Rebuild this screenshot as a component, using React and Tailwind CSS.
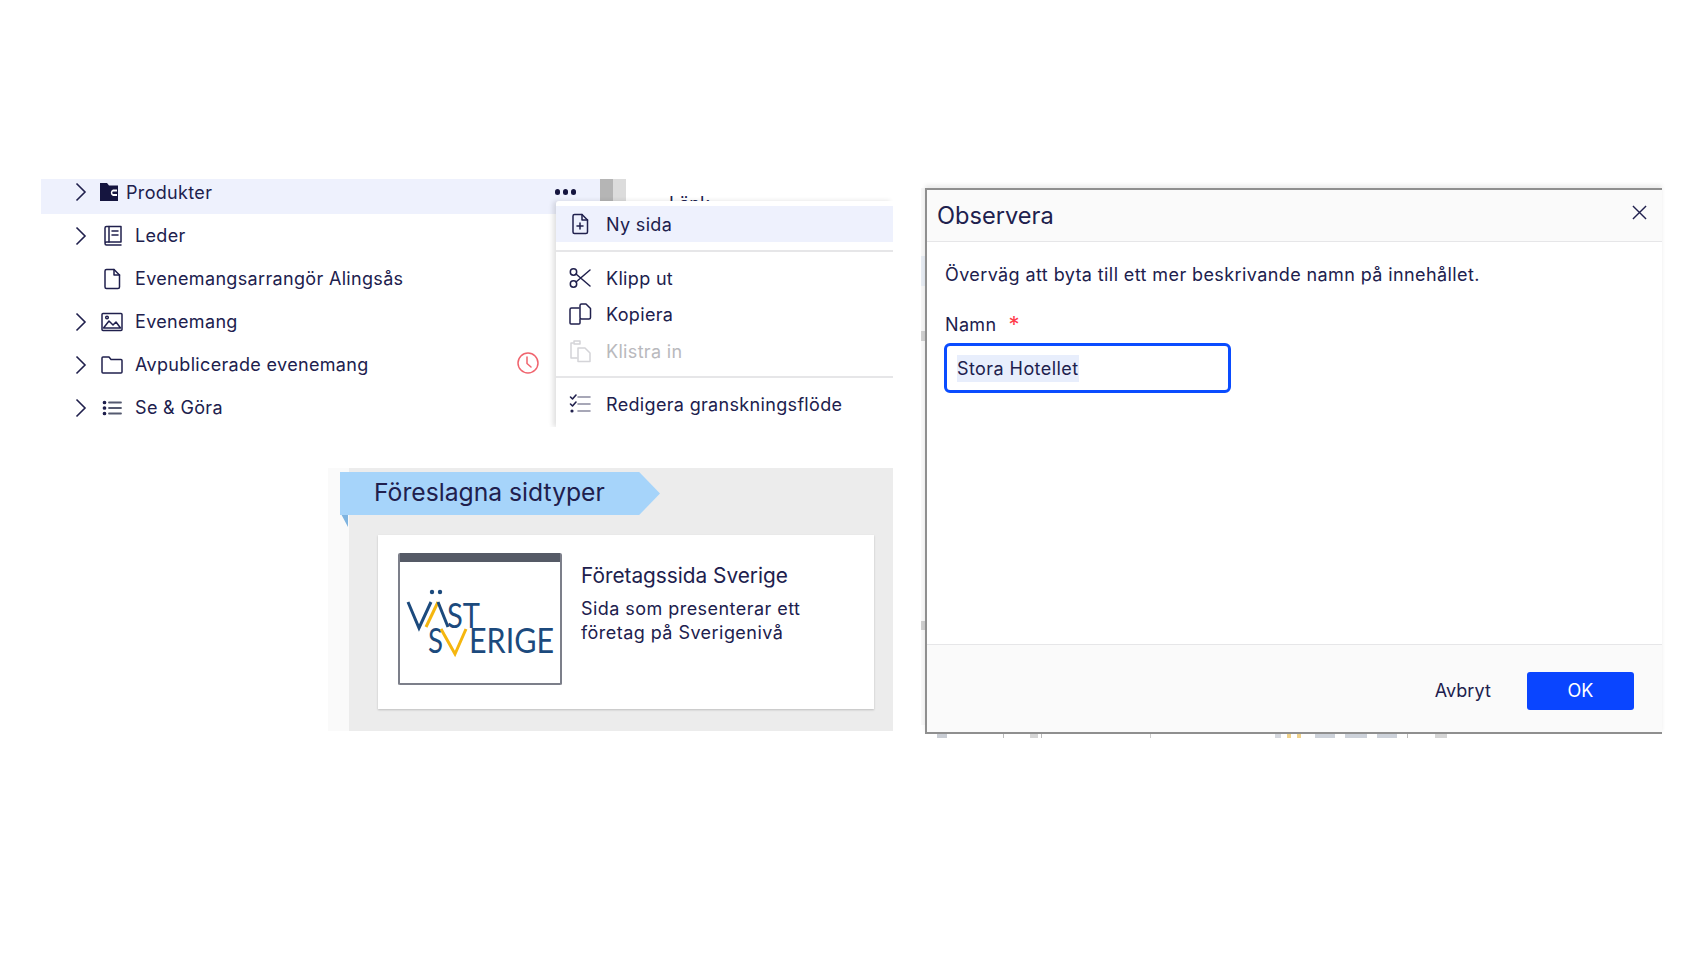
import React from "react";

const NAVY = "#20204d";

function Chevron() {
  return (
    <svg width="14" height="20" viewBox="0 0 14 20" fill="none" stroke={NAVY} strokeWidth="1.6">
      <path d="M2.5 1.5 L11 10 L2.5 18.5" />
    </svg>
  );
}

function Ico({ children, w = 24, h = 24, color = NAVY, sw = 1.5 }) {
  return (
    <svg width={w} height={h} viewBox="0 0 24 24" fill="none" stroke={color} strokeWidth={sw} strokeLinecap="round" strokeLinejoin="round">
      {children}
    </svg>
  );
}

const ProdIcon = () => (
  <svg width="20" height="20" viewBox="0 0 20 20">
    <path d="M1 1 H8 L10 3.5 H19 V19 H1 Z" fill="#15153f" />
    <path d="M18 7.5 H14 A3.5 3.5 0 0 0 14 14 H18 V12 H14.5 A1.2 1.2 0 0 1 14.5 9.5 H18 Z" fill="#fff" />
  </svg>
);
const BookIcon = () => (
  <Ico><path d="M5 18.5 V4 A1.5 1.5 0 0 1 6.5 2.5 H21 V18 H6.5 A1.5 1.5 0 0 0 5 19.5 A1.5 1.5 0 0 0 6.5 21 H21" /><path d="M9 2.5 V18" /><path d="M12 7 H18 M12 11 H18" /></Ico>
);
const FileIcon = () => (
  <Ico><path d="M5 4 A1.5 1.5 0 0 1 6.5 2.5 H14 L19.5 8 V20 A1.5 1.5 0 0 1 18 21.5 H6.5 A1.5 1.5 0 0 1 5 20 Z" /><path d="M14 2.5 V8 H19.5" /></Ico>
);
const ImgIcon = () => (
  <Ico><rect x="2" y="3.5" width="20" height="17" rx="1" /><circle cx="7" cy="7.5" r="1.3" /><path d="M3.5 18 L9 11 L13 15 L16 12 L20.5 18 Z" /></Ico>
);
const FolderIcon = () => (
  <Ico><path d="M2 5 A1 1 0 0 1 3 4 H9 L11 6.5 H21 A1 1 0 0 1 22 7.5 V19 A1 1 0 0 1 21 20 H3 A1 1 0 0 1 2 19 Z" /></Ico>
);
const ListIcon = () => (
  <Ico><path d="M9 6.5 H21 M9 12 H21 M9 17.5 H21" stroke="#555a70" strokeWidth="1.8" /><circle cx="4.5" cy="6.5" r="1.1" fill={NAVY} /><circle cx="4.5" cy="12" r="1.1" fill={NAVY} /><circle cx="4.5" cy="17.5" r="1.1" fill={NAVY} /></Ico>
);
const ClockIcon = () => (
  <Ico color="#f0646e" w={24} h={24}><circle cx="12" cy="12" r="10" /><path d="M11 6 V12.5 L15 16" /></Ico>
);

const rows = [
  { label: "Leder", icon: <BookIcon />, chev: true },
  { label: "Evenemangsarrangör Alingsås", icon: <FileIcon />, chev: false },
  { label: "Evenemang", icon: <ImgIcon />, chev: true },
  { label: "Avpublicerade evenemang", icon: <FolderIcon />, chev: true, clock: true },
  { label: "Se & Göra", icon: <ListIcon />, chev: true },
];

function Tree() {
  return (
    <div className="flex flex-col w-[585px]">
      <div className="flex">
        <div className="flex items-center w-[559px] h-[35px] pb-[9px] pl-[33px] bg-[#eef1fd] text-[18px] tracking-[0.33px]">
          <span className="w-[14px] flex"><Chevron /></span>
          <span className="ml-[11px] w-[27px] flex"><ProdIcon /></span>
          <span>Produkter</span>
          <span className="ml-auto mr-[24px] flex gap-[2.5px]">
            <i className="w-[5.5px] h-[5.5px] rounded-full bg-[#15153f]" />
            <i className="w-[5.5px] h-[5.5px] rounded-full bg-[#15153f]" />
            <i className="w-[5.5px] h-[5.5px] rounded-full bg-[#15153f]" />
          </span>
        </div>
        <div className="w-[13px] h-[22px] bg-[#b5b5b5]" />
        <div className="w-[13px] h-[22px] bg-[#dcdcdc]" />
      </div>
      {rows.map((r) => (
        <div key={r.label} className="flex items-center h-[43px] w-[559px] pl-[33px] text-[18px] tracking-[0.33px]">
          <span className="w-[14px] flex">{r.chev && <Chevron />}</span>
          <span className="ml-[12px] w-[35px] flex">{r.icon}</span>
          <span>{r.label}</span>
          {r.clock && <span className="ml-auto mr-[60px] mb-[4px] flex"><ClockIcon /></span>}
        </div>
      ))}
    </div>
  );
}

function MenuItem({ icon, label, active, disabled }) {
  return (
    <div className={`flex items-center h-[36px] pl-[12px] text-[18px] tracking-[0.33px] ${active ? "bg-[#eef1fd]" : ""} ${disabled ? "text-[#b9b9bd]" : ""}`}>
      <span className="w-[38px] flex">{icon}</span>
      <span>{label}</span>
    </div>
  );
}

function Menu() {
  return (
    <div className="absolute left-[556px] top-[201px] w-[337px] h-[226px] bg-white pt-[5px] shadow-[-3px_0_5px_rgba(0,0,0,0.12)] rounded-tl-[3px] [clip-path:inset(-4px_0_0_-8px)]">
      <MenuItem active label="Ny sida" icon={<Ico><path d="M5 4 A1.5 1.5 0 0 1 6.5 2.5 H14 L19.5 8 V20 A1.5 1.5 0 0 1 18 21.5 H6.5 A1.5 1.5 0 0 1 5 20 Z" /><path d="M14 2.5 V8 H19.5" /><path d="M12 11 V17 M9 14 H15" /></Ico>} />
      <div className="h-[2px] bg-[#e6e6e8] mt-[8px] mb-[8px]" />
      <MenuItem label="Klipp ut" icon={<Ico><circle cx="5.5" cy="6" r="3.2" /><circle cx="5.5" cy="18" r="3.2" /><path d="M8 8 L22 20 M8 16 L22 4" /></Ico>} />
      <MenuItem label="Kopiera" icon={<Ico><path d="M11 6 H3.5 A1.5 1.5 0 0 0 2 7.5 V21 A1 1 0 0 0 3 22 H11 A1 1 0 0 0 12 21 V17" /><path d="M12 3.5 A1.5 1.5 0 0 1 13.5 2 H18 L22.5 6.5 V15.5 A1.5 1.5 0 0 1 21 17 H13.5 A1.5 1.5 0 0 1 12 15.5 Z" /></Ico>} />
      <div className="pt-[1px]">
        <MenuItem disabled label="Klistra in" icon={<Ico color="#d4d4d8"><path d="M5 4 H3 V19 H9" /><rect x="6" y="2" width="6" height="3" /><path d="M10 9 H17 L22 14 V22.5 H10 Z" /></Ico>} />
      </div>
      <div className="h-[2px] bg-[#e6e6e8] mt-[7px] mb-[8px]" />
      <MenuItem label="Redigera granskningsflöde" icon={<Ico sw={1.6}><path d="M10 5 H22 M10 12 H22 M10 19 H22" stroke="#8a8aa0" /><path d="M2.5 5 L4.5 7 L8 3 M2.5 12 L4.5 14 L8 10" /><circle cx="4" cy="19" r="0.8" /></Ico>} />
    </div>
  );
}

function Logo() {
  const blue = "#1c4a7d";
  const gold = "#f5b60f";
  return (
    <svg width="156" height="75" viewBox="0 0 156 75">
      <circle cx="31" cy="7" r="2.2" fill={blue} />
      <circle cx="39" cy="7" r="2.2" fill={blue} />
      <path d="M7 17 L18 43 L30 17" stroke={blue} strokeWidth="3" fill="none" />
      <path d="M25 42 L37 17" stroke={gold} strokeWidth="3" fill="none" />
      <path d="M37 17 L47 42" stroke={blue} strokeWidth="3" fill="none" />
      <text x="46" y="43" fontFamily="Lato, sans-serif" fontSize="35" fill={blue} textLength="33" lengthAdjust="spacingAndGlyphs">ST</text>
      <text x="27" y="68" fontFamily="Lato, sans-serif" fontSize="35" fill={blue} textLength="15" lengthAdjust="spacingAndGlyphs">S</text>
      <path d="M40 44 L54 69 L65 44" stroke={gold} strokeWidth="3" fill="none" />
      <text x="68" y="68" fontFamily="Lato, sans-serif" fontSize="35" fill={blue} textLength="85" lengthAdjust="spacingAndGlyphs">ERIGE</text>
    </svg>
  );
}

function Suggest() {
  return (
    <div className="relative mt-[39px] ml-[287px] w-[565px] h-[263px] bg-[#fafafa] pl-[21px]">
      <div className="h-full bg-[#ececec] pl-[29px] pt-[67px]">
        <div className="flex w-[496px] h-[174px] bg-white pl-[20px] pt-[18px] shadow-[0_1px_2px_rgba(0,0,0,0.2)]">
          <div className="flex flex-col w-[164px] h-[132px] rounded-[2px] border-2 border-t-0 border-[#7c7f8a] bg-white overflow-hidden shrink-0">
            <div className="h-[9px] bg-[#555a66] shrink-0" />
            <div className="mt-[23px] ml-[1px] flex"><Logo /></div>
          </div>
          <div className="ml-[19px] pt-[9px]">
            <div className="text-[20.8px] leading-[27px]">Företagssida Sverige</div>
            <div className="mt-[8px] text-[18px] tracking-[0.45px] leading-[24px] w-[260px]">Sida som presenterar ett företag på Sverigenivå</div>
          </div>
        </div>
      </div>
      <svg className="absolute left-[12px] top-[4px]" width="8" height="55" viewBox="0 0 8 55"><path d="M0 40 L8 40 L8 55 Z" fill="#7fb4e0" /></svg>
      <div className="absolute left-[12px] top-[4px] w-[320px] h-[43px] pb-[2px] bg-[#a6d4fa] [clip-path:polygon(0_0,93.5%_0,100%_50%,93.5%_100%,0_100%)] flex items-center pl-[34px] text-[24.7px]">
        Föreslagna sidtyper
      </div>
    </div>
  );
}

function Dialog() {
  return (
    <div className="flex flex-col w-[737px] h-[546px] bg-white border-t-2 border-l-2 border-b-2 border-[#8f8f8f] shadow-[0_-3px_4px_rgba(0,0,0,0.08)]">
      <div className="relative flex items-center h-[52px] bg-[#fafafa] border-b border-[#e6e6e8] pl-[10px]">
        <span className="text-[23.6px]">Observera</span>
        <svg className="absolute right-[15px] top-[15px]" width="15" height="15" viewBox="0 0 16 16" fill="none" stroke={NAVY} strokeWidth="1.5"><path d="M1 1 L15 15 M15 1 L1 15" /></svg>
      </div>
      <div className="flex-1 pl-[17px] pt-[21px]">
        <div className="ml-[1px] text-[18px] tracking-[0.4px] leading-[24px]">Överväg att byta till ett mer beskrivande namn på innehållet.</div>
        <div className="ml-[1px] mt-[26px] text-[18px] tracking-[0.35px] leading-[24px] flex">
          <span>Namn</span>
          <span className="ml-[12px] text-[#ff3b4a] text-[22px] leading-[22px]">*</span>
        </div>
        <div className="mt-[6px] flex items-center w-[287px] h-[50px] border-[3px] border-[#0a4cff] rounded-[6px] pl-[10px] text-[18px] tracking-[0.43px]">
          <span className="bg-[#e8eefc]">Stora Hotellet</span>
        </div>
      </div>
      <div className="flex items-center justify-end h-[88px] bg-[#fafafa] border-t border-[#e6e6e8] pr-[28px] pt-[4px]">
        <span className="text-[18px] mr-[36px] tracking-[0.1px]">Avbryt</span>
        <span className="flex items-center justify-center w-[107px] h-[38px] rounded-[3px] bg-[#0a45ff] text-white text-[18px]">OK</span>
      </div>
    </div>
  );
}

const sideBits = [
  ["h-[68px]", "bg-[#f7f7f7]"],
  ["h-[30px]", "bg-[#e6ebf2]"],
  ["h-[45px]", "bg-[#f5f5f5]"],
  ["h-[10px]", "bg-[#cfcfcf]"],
  ["h-[280px]", "bg-[#f8f8f8]"],
  ["h-[9px]", "bg-[#cfcfcf]"],
  ["h-[95px]", "bg-[#f8f8f8]"],
];

const bottomBits = [
  [12, 10, "#c9cdd4"], [78, 1, "#bbb"], [105, 8, "#d5d5d5"], [116, 1, "#bbb"],
  [225, 1, "#ccc"], [350, 6, "#d5d8de"], [362, 4, "#f0d28a"], [372, 4, "#f0d28a"],
  [390, 20, "#cdd2da"], [420, 22, "#cdd2da"], [452, 20, "#cdd2da"], [482, 1, "#bbb"], [510, 12, "#d5d5d5"],
];

export default function App() {
  return (
    <div className="relative flex w-[1703px] h-[957px] bg-white pt-[179px] overflow-hidden text-[#20204d] font-['Inter',sans-serif]">
      <div className="flex flex-col w-[893px] pl-[41px]">
        <div className="flex">
          <Tree />
          <span className="ml-[43px] mt-[13px] text-[18px] leading-[24px] h-[9px] overflow-hidden">Länk</span>
        </div>
        <Suggest />
      </div>
      <div className="ml-[28px] mt-[9px] w-[4px] flex flex-col">
        {sideBits.map(([h, c], i) => <div key={i} className={`${h} ${c}`} />)}
      </div>
      <div className="flex flex-col mt-[9px]">
        <Dialog />
        <div className="relative h-[5px]">
          {bottomBits.map(([x, w, c], i) => (
            <i key={i} className="absolute top-0 h-[4px]" style={{ left: x, width: w, background: c }} />
          ))}
        </div>
      </div>
      <Menu />
    </div>
  );
}
